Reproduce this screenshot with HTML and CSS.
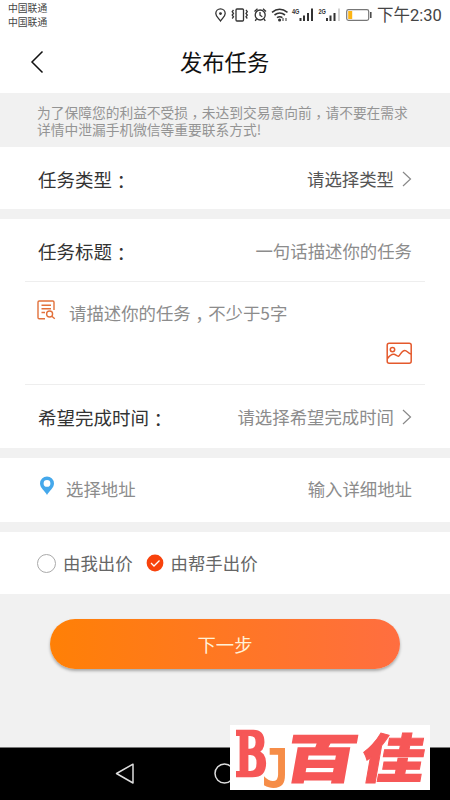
FILE: index.html
```html
<!DOCTYPE html>
<html lang="zh-CN">
<head>
<meta charset="utf-8">
<title>发布任务</title>
<link rel="stylesheet" href="styles.css">
</head>
<body>
<div class="screen">
  <header class="top">
    <div class="status">
      <div class="carriers"><span>中国联通</span><span>中国联通</span></div>
      <svg class="status-icons" width="137" height="24" viewBox="0 0 137 24" fill="none" stroke="#333" stroke-width="1.3">
        <path d="M10.500 21C8.500 18 5.800 16.200 5.800 13.500a4.700 4.700 0 0 1 9.400 0c0 2.700-2.700 4.500-4.700 7.500z"/><circle cx="10.500" cy="13.600" r=".8" fill="#333"/>
        <rect x="26" y="9" width="7.500" height="12" rx="1"/><path d="M23.500 10l-1.300 1.700 1.300 1.700-1.300 1.700 1.300 1.700-1.300 1.700M36 10l1.300 1.700-1.300 1.700 1.300 1.700-1.300 1.700 1.300 1.700"/>
        <circle cx="50.200" cy="15" r="5"/><path d="M50 12v3.200l2.300 1.500M44.500 11.500l3-2.800M56 11.500l-3-2.800M46.500 19l-1.300 1.800M54 19l1.300 1.800"/>
        <path stroke-width="1.600" d="M62 12.300q7.500-6 15.500 0M64.500 15q5.300-4 10.500 0M67 17.700q2.800-2 5.400 0"/><circle cx="69.600" cy="20" r=".9" fill="#333"/><path stroke-width="1" d="M73 18v3M76 18v3"/>
        <path stroke-width="2" d="M90.500 21v-3M94 21v-5.500M98 21v-8M102 21V8.500M117 21v-3M120.500 21v-5.500M124.500 21v-8"/><path stroke="#bbb" d="M129 21V8.500"/>
        <g class="net" stroke="none" fill="#333"><text x="82" y="13.500" textLength="7.500" lengthAdjust="spacingAndGlyphs">4G</text><text x="108.500" y="13.500" textLength="7.500" lengthAdjust="spacingAndGlyphs">2G</text></g>
      </svg>
      <svg class="battery" width="26" height="12" viewBox="0 0 26 12"><rect x=".7" y=".7" width="22" height="10.600" rx="1.800" fill="none" stroke="#777" stroke-width="1.200"/><rect x="2.200" y="2" width="4" height="8" fill="#fdb515"/><path d="M24.800 3v6" stroke="#444" stroke-width="1.500"/></svg>
      <span class="clock">下午2:30</span>
    </div>
    <div class="title-bar">
      <svg class="back" width="14" height="24" viewBox="0 0 14 24"><path d="M12.500 1.500L2 12l10.500 10.500" fill="none" stroke="#111" stroke-width="1.500"/></svg>
      <h1>发布任务</h1>
    </div>
  </header>
  <p class="notice">为了保障您的利益不受损<span class="comma" lang="zh-TW">，</span>未达到交易意向前<span class="comma" lang="zh-TW">，</span>请不要在需求<br>详情中泄漏手机微信等重要联系方式!</p>
  <section class="card row type">
    <span class="label">任务类型<span class="colon" lang="zh-TW">：</span></span>
    <span class="value dark">请选择类型</span>
    <svg class="arrow" width="10" height="16" viewBox="0 0 10 16"><path d="M1 1l7.500 7L1 15"/></svg>
  </section>
  <section class="card details">
    <div class="row subject"><span class="label">任务标题<span class="colon" lang="zh-TW">：</span></span><span class="value">一句话描述你的任务</span></div>
    <div class="describe">
      <svg class="doc" width="20" height="20" viewBox="0 0 20 20" fill="none" stroke="#e2713b" stroke-width="1.400"><path d="M8 18.800H2.200A1.200 1.200 0 0 1 1 17.600V2.200A1.200 1.200 0 0 1 2.200 1h13.600A1.200 1.200 0 0 1 17 2.200V10M4.500 5.200h9.500M4.500 8.700h9.500M4.500 12.500H8"/><circle cx="12.600" cy="14" r="3"/><path d="M14.800 16.200l3 2.500"/></svg>
      <span class="value">请描述你的任务<span class="comma" lang="zh-TW">，</span>不少于5字</span>
      <svg class="photo" width="27" height="23" viewBox="0 0 27 23" fill="none" stroke="#e4592c" stroke-width="1.500"><rect x="1.200" y="1.200" width="24" height="20" rx="2"/><circle cx="6.500" cy="7.600" r="2.200"/><path d="M1.500 16.500C4 13 6.500 12 8 12.200s3 2.300 4.500 2 3-5.700 6.300-5.700c2.200 0 3.200 2.700 6.200 3.500"/></svg>
    </div>
    <div class="row deadline"><span class="label">希望完成时间<span class="colon" lang="zh-TW">：</span></span><span class="value">请选择希望完成时间</span><svg class="arrow" width="10" height="16" viewBox="0 0 10 16"><path d="M1 1l7.500 7L1 15"/></svg></div>
  </section>
  <section class="card row address">
    <svg class="pin" width="16" height="20" viewBox="0 0 16 20"><path fill="#45a8eb" fill-rule="evenodd" d="M8 19C6 15 1 12 1 7.500a7 7 0 0 1 14 0C15 12 10 15 8 19zM8 4a3.400 3.400 0 1 0 0 6.800A3.400 3.400 0 0 0 8 4z"/></svg>
    <span class="value place">选择地址</span><span class="value">输入详细地址</span>
  </section>
  <section class="card pricing">
    <span class="radio"></span><span class="option">由我出价</span>
    <svg class="checked" width="18" height="18" viewBox="0 0 18 18"><circle cx="9" cy="9" r="8.400" fill="#f8420c"/><path d="M5 9l3 3 5.500-5.500" fill="none" stroke="#fff" stroke-width="1.300"/></svg><span class="option">由帮手出价</span>
  </section>
  <main class="action"><button class="next">下一步</button></main>
  <nav class="navbar">
    <svg width="240" height="52" viewBox="0 0 240 52" fill="none" stroke="#ddd" stroke-width="1.500"><path stroke-linejoin="round" d="M116.500 25.500L133 16.200v18.800z"/><circle cx="224.500" cy="25.500" r="9.500"/></svg>
  </nav>
  <div class="brand">
    <svg width="200" height="65" viewBox="0 0 200 65">
      <g fill="#f65757" stroke="#f65757">
        <text class="letter-b" stroke-width="2.500" transform="translate(5 51) scale(.62 1)" font-size="62">B</text>
        <text class="word" stroke-width="1.500" transform="translate(52.500 53) skewX(-10) scale(1.190 .88)" font-size="60">百</text>
        <text class="word" stroke-width="1" transform="translate(128.500 53) skewX(-10) scale(1.060 .88)" font-size="60">佳</text>
      </g>
      <text class="letter-j" transform="translate(31.500 61.500) scale(.9 1)" font-size="53">J</text>
    </svg>
  </div>
</div>
</body>
</html>
```
FILE: styles.css
```css
* { box-sizing: border-box; }
body { margin: 0; font-family: "Noto Sans CJK SC", sans-serif; background: #f1f1f1; }
.screen { position: relative; width: 450px; height: 800px; display: flex; flex-direction: column; overflow: hidden; background: #f1f1f1; }
svg { display: block; flex: none; overflow: visible; }
.top { height: 93px; background: #fff; flex: none; }
.status { height: 30px; display: flex; align-items: flex-start; padding-left: 8px; }
.carriers { width: 202px; padding-top: 2px; display: flex; flex-direction: column; font-size: 9.8px; line-height: 13.5px; color: #444; }
.status-icons { margin-right: -1px; }
.net { font: bold 7.5px "Liberation Sans", sans-serif; }
.battery { margin-top: 9px; }
.clock { margin-left: 5px; padding-top: 1px; font: 16.5px/30px Roboto, "Noto Sans CJK SC", sans-serif; color: #444; white-space: nowrap; }
.title-bar { height: 63px; display: flex; align-items: center; padding-left: 30px; }
h1 { margin: -2px 0 0 136px; font-size: 22.3px; line-height: 32px; font-weight: 400; color: #111; }
.comma, .colon { font-family: "Noto Sans CJK TC", sans-serif; line-height: 0; }
.comma { vertical-align: -.32em; }
.colon { vertical-align: -.1em; }
.notice { margin: 0; height: 54px; flex: none; padding: 11px 0 0 37px; font-size: 13.74px; line-height: 16.5px; color: #949494; white-space: nowrap; }
.card { background: #fff; flex: none; }
.row { display: flex; align-items: center; padding: 0 38px; }
.label { flex: 1; font-size: 18.5px; line-height: 28px; color: #333; white-space: nowrap; }
.value { font-size: 17.4px; line-height: 26px; color: #8c8c8c; white-space: nowrap; }
.dark { color: #555; }
.arrow { margin-left: 8px; fill: none; stroke: #888; stroke-width: 1.2; }
.type { height: 62px; padding-top: 1px; }
.details { height: 229px; margin-top: 10px; }
.subject { height: 62px; padding-top: 2px; }
.describe { height: 104px; margin: 0 25px; border-top: 1px solid #eee; border-bottom: 1px solid #eee; display: flex; align-items: flex-start; padding: 18px 12px 0; }
.describe .value { flex: 1; margin-left: 12px; }
.photo { margin-top: 42px; }
.deadline { height: 63px; }
.address { height: 64px; margin-top: 10px; padding-left: 39px; padding-bottom: 2px; }
.pin { margin-top: -6px; }
.place { flex: 1; margin-left: 11px; }
.pricing { height: 62px; margin-top: 10px; display: flex; align-items: center; padding-left: 37px; }
.radio { width: 19px; height: 19px; border: 1px solid #aaa; border-radius: 50%; margin-right: 7px; }
.option { font-size: 17.4px; line-height: 26px; color: #666; }
.checked { margin: 0 7px 0 13px; }
.action { flex: 1; padding: 25px 50px; }
.next { display: block; width: 350px; height: 50px; border: 0; border-radius: 25px; padding: 0; font: 18.3px/50px "Noto Sans CJK SC", sans-serif; color: #fff1d8; background: linear-gradient(90deg, #ff8006, #ff6e40); box-shadow: 0 2px 3px rgba(0, 0, 0, .3); }
.navbar { height: 53px; flex: none; background: #000; border-top: 1px solid #777; }
.brand { position: absolute; left: 230px; top: 725px; width: 200px; height: 65px; background: #fff; }
.word { font-family: "Noto Sans CJK SC", sans-serif; font-weight: 900; }
.letter-b { font-family: "DejaVu Serif", serif; font-weight: 700; }
.letter-j { font-family: "DejaVu Sans Mono", monospace; font-weight: 700; fill: #f68d48; stroke: #fff; stroke-width: 2px; paint-order: stroke; }
```
